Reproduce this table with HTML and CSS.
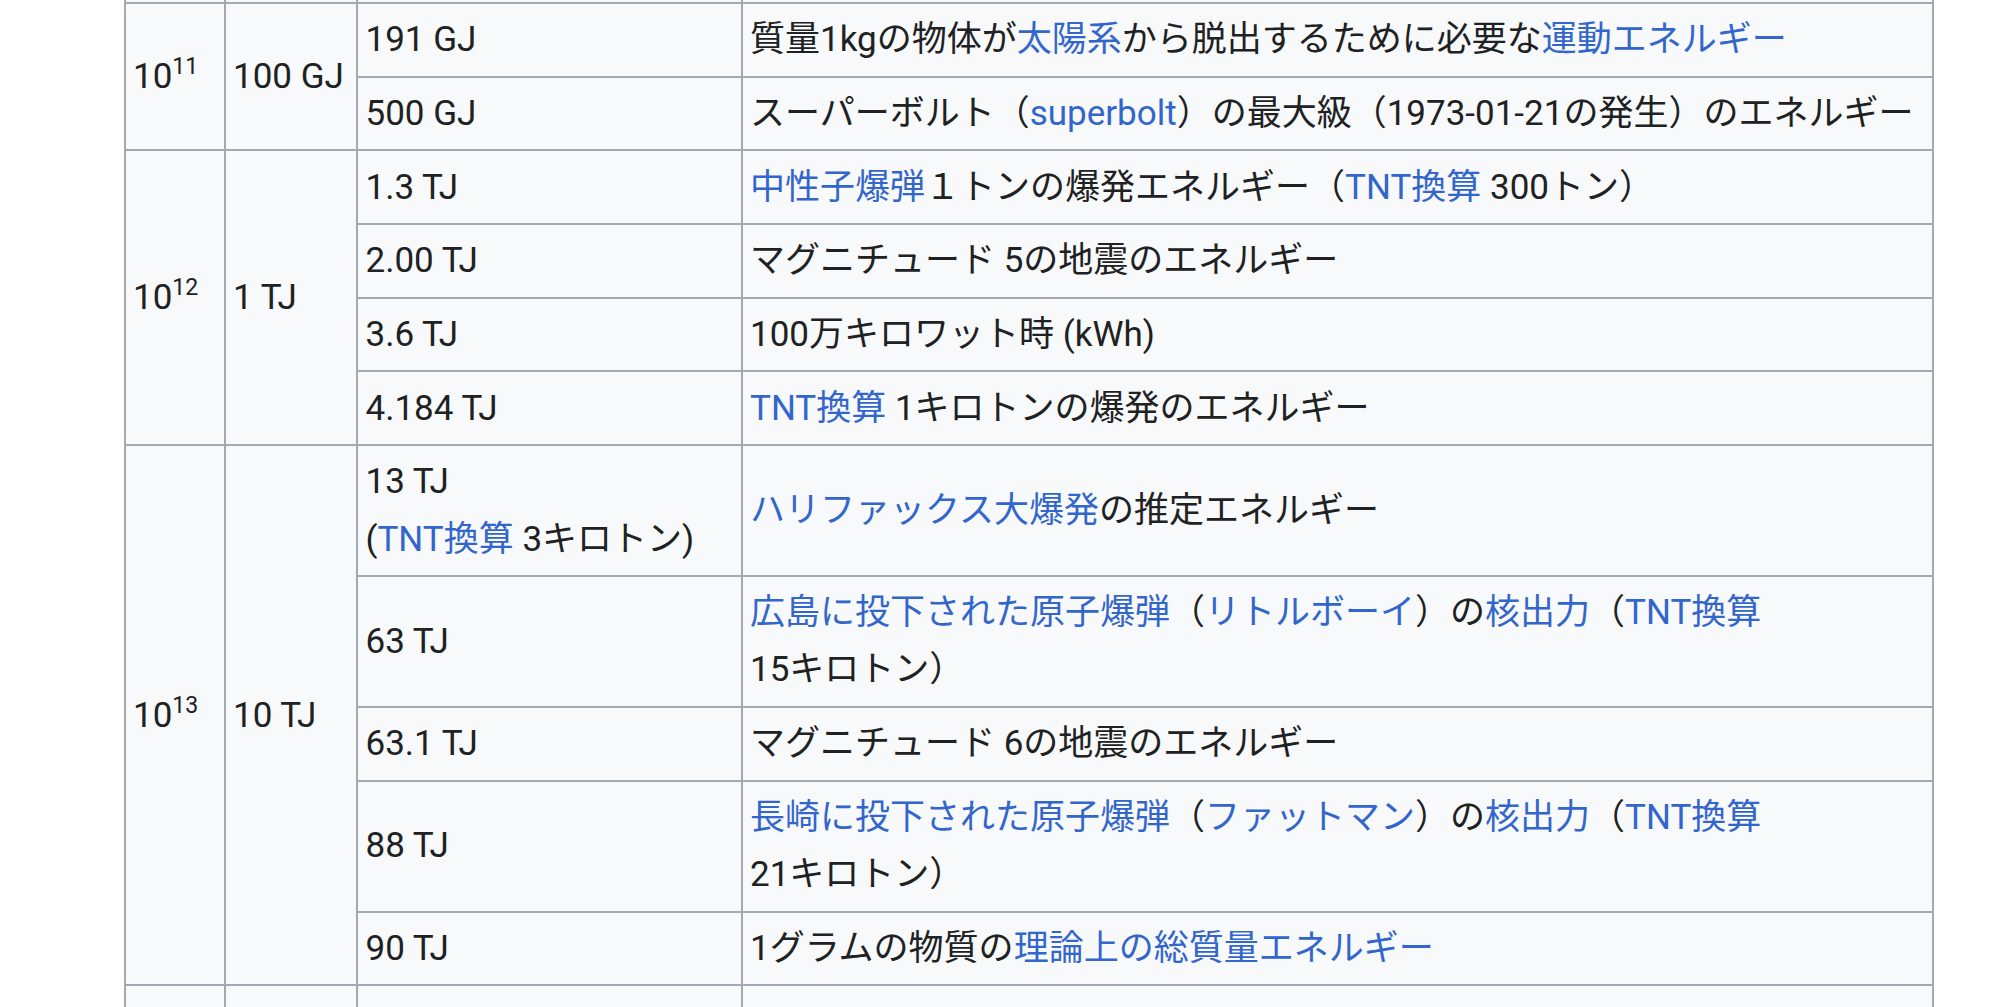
FILE: index.html
```html
<!DOCTYPE html>
<html lang="ja">
<head>
<meta charset="utf-8">
<title>エネルギーの比較</title>
<link rel="stylesheet" href="styles.css">
</head>
<body>
<table class="wikitable">
  <colgroup>
    <col class="c-exp">
    <col class="c-unit">
    <col class="c-val">
    <col class="c-desc">
  </colgroup>
  <tbody>
    <tr class="cut"><td></td><td></td><td></td><td></td></tr>

    <tr>
      <td rowspan="2">10<sup>11</sup></td>
      <td rowspan="2">100 GJ</td>
      <td>191 GJ</td>
      <td>質量1kgの物体が<a href="#">太陽系</a>から脱出するために必要な<a href="#">運動エネルギー</a></td>
    </tr>
    <tr>
      <td>500 GJ</td>
      <td>スーパーボルト（<a href="#">superbolt</a>）の最大級（1973-01-21の発生）のエネルギー</td>
    </tr>

    <tr>
      <td rowspan="4">10<sup>12</sup></td>
      <td rowspan="4">1 TJ</td>
      <td>1.3 TJ</td>
      <td><a href="#">中性子爆弾</a>１トンの爆発エネルギー（<a href="#">TNT換算</a> 300トン）</td>
    </tr>
    <tr>
      <td>2.00 TJ</td>
      <td>マグニチュード 5の地震のエネルギー</td>
    </tr>
    <tr>
      <td>3.6 TJ</td>
      <td>100万キロワット時 (kWh)</td>
    </tr>
    <tr>
      <td>4.184 TJ</td>
      <td><a href="#">TNT換算</a> 1キロトンの爆発のエネルギー</td>
    </tr>

    <tr>
      <td rowspan="5">10<sup>13</sup></td>
      <td rowspan="5">10 TJ</td>
      <td>13 TJ<br>(<a href="#">TNT換算</a> 3キロトン)</td>
      <td><a href="#">ハリファックス大爆発</a>の推定エネルギー</td>
    </tr>
    <tr>
      <td>63 TJ</td>
      <td><a href="#">広島に投下された原子爆弾</a>（<a href="#">リトルボーイ</a>）の<a href="#">核出力</a>（<a href="#">TNT換算</a> <span class="nowrap">15キロトン）</span></td>
    </tr>
    <tr>
      <td>63.1 TJ</td>
      <td>マグニチュード 6の地震のエネルギー</td>
    </tr>
    <tr>
      <td>88 TJ</td>
      <td><a href="#">長崎に投下された原子爆弾</a>（<a href="#">ファットマン</a>）の<a href="#">核出力</a>（<a href="#">TNT換算</a> <span class="nowrap">21キロトン）</span></td>
    </tr>
    <tr>
      <td>90 TJ</td>
      <td>1グラムの物質の<a href="#">理論上の総質量エネルギー</a></td>
    </tr>

    <tr class="tail"><td></td><td></td><td></td><td></td></tr>
  </tbody>
</table>
</body>
</html>
```

FILE: styles.css
```css
html, body {
  margin: 0;
  padding: 0;
  background: #ffffff;
  overflow: hidden;
}

body {
  font-family: Roboto, "Noto Sans CJK JP", sans-serif;
  font-size: 35px;
  line-height: 57.3px;
  color: #202122;
}

.wikitable {
  border-collapse: collapse;
  table-layout: fixed;
  width: 1810.5px;
  margin-left: 123.5px;
  background: #f8f9fa;
  color: #202122;
}

.c-exp { width: 100px; }
.c-unit { width: 132.5px; }
.c-val { width: 384.5px; }
.c-desc { width: 1191.5px; }

.wikitable td {
  border: 2px solid #a2a9b1;
  padding: 7.2px 7.5px;
  text-align: left;
  vertical-align: middle;
}

.wikitable tr.cut td {
  border-top: none;
  padding: 0;
  height: 2px;
  line-height: 0;
}

.wikitable tr.tail td {
  border-bottom: none;
  padding: 0;
  height: 22px;
  line-height: 0;
}

.wikitable sup {
  font-size: 0.66em;
  line-height: 1;
  vertical-align: 0.62em;
}

.wikitable a {
  color: #3366cc;
  text-decoration: none;
}

.nowrap {
  white-space: nowrap;
}
```
